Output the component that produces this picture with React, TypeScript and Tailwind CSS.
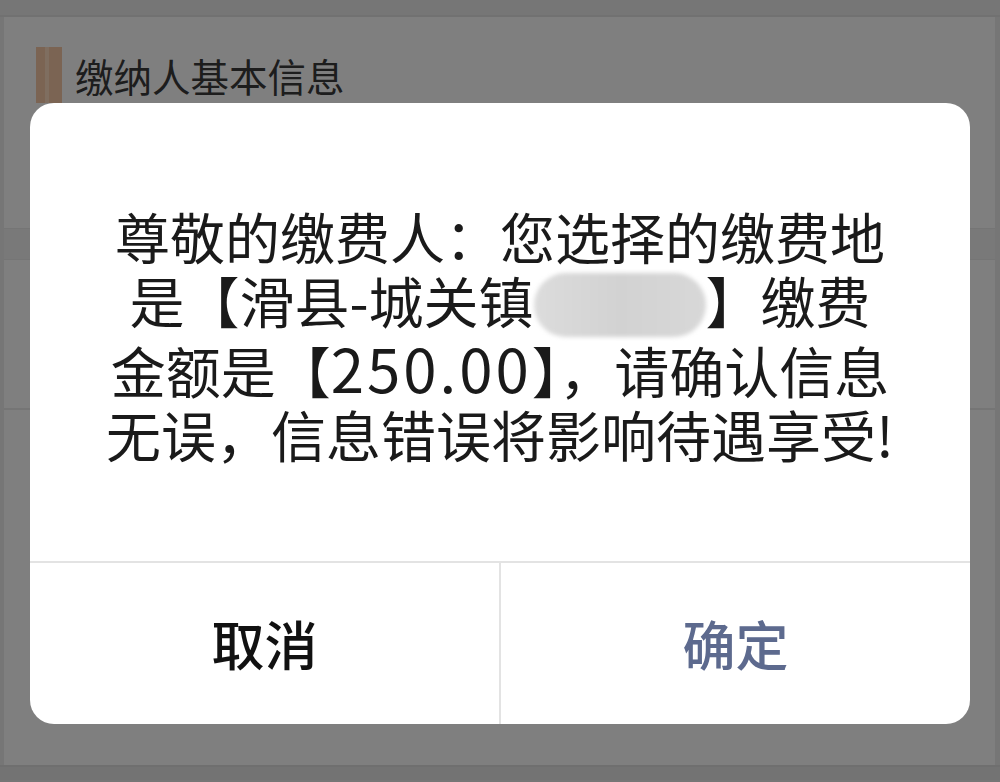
import React from "react";

const font = { fontFamily: '"Noto Sans CJK SC", "Noto Sans", sans-serif' };

function BlurredText() {
  return (
    <span className="inline-block align-middle w-[172px] h-[64px] rounded-full bg-gradient-to-r from-[#dcdcdc] via-[#d2d2d2] to-[#d8d8d8] blur-[2px] -mt-[6px]" />
  );
}

export default function App(): React.ReactNode {
  return (
    <div className="relative w-full h-[782px] bg-[#ededed] overflow-hidden" style={font}>
      {/* page under the dialog */}
      <div className="h-[17px] bg-[#ececec] border-b-2 border-[#e2e2e2]" />
      <div className="ml-[4px] mr-[5px] h-[748px] bg-white flex flex-col">
        <div className="flex items-center pt-[30px] h-[86px]">
          <div className="ml-[32px] w-[26px] h-[56px] bg-[#f6c9a6] flex justify-start">
            <div className="ml-[9px] w-[4px] bg-[#ffdcc0]" />
          </div>
          <span className="ml-[13px] text-[38.5px] leading-none text-[#3a3a3a]">缴纳人基本信息</span>
        </div>
        <div className="mt-[125px] h-[32px] bg-[#f3f3f3] border-y border-[#ebebeb]" />
        <div className="mt-[148px] border-t-2 border-[#ebebeb]" />
      </div>
      <div className="h-[15px] bg-[#e6e6e6] border-t-2 border-[#dedede]" />

      {/* mask */}
      <div className="absolute inset-0 bg-black/50" />

      {/* dialog */}
      <div className="absolute left-[30px] top-[103px] w-[940px] h-[621px] rounded-[24px] bg-white flex flex-col overflow-hidden">
        <div className="h-[458px] flex items-center justify-center pt-[4px]">
          <p className="text-center text-[55px] leading-[64px] text-[#1a1a1a]">
            尊敬的缴费人：您选择的缴费地
            <br />
            是【滑县-城关镇<BlurredText />】缴费
            <br />
            金额是【<span className="text-[60px] tracking-[3px] leading-none">250.00</span>】，请确认信息
            <br />
            无误，信息错误将影响待遇享受!
          </p>
        </div>
        <div className="flex flex-1 border-t-2 border-[#e3e3e3]">
          <button className="flex-1 flex items-center justify-center border-r-2 border-[#e3e3e3] text-[53px] font-medium text-[#111111]">
            取消
          </button>
          <button className="flex-1 flex items-center justify-center text-[53px] font-medium text-[#5d6a8e]">
            确定
          </button>
        </div>
      </div>
    </div>
  );
}
